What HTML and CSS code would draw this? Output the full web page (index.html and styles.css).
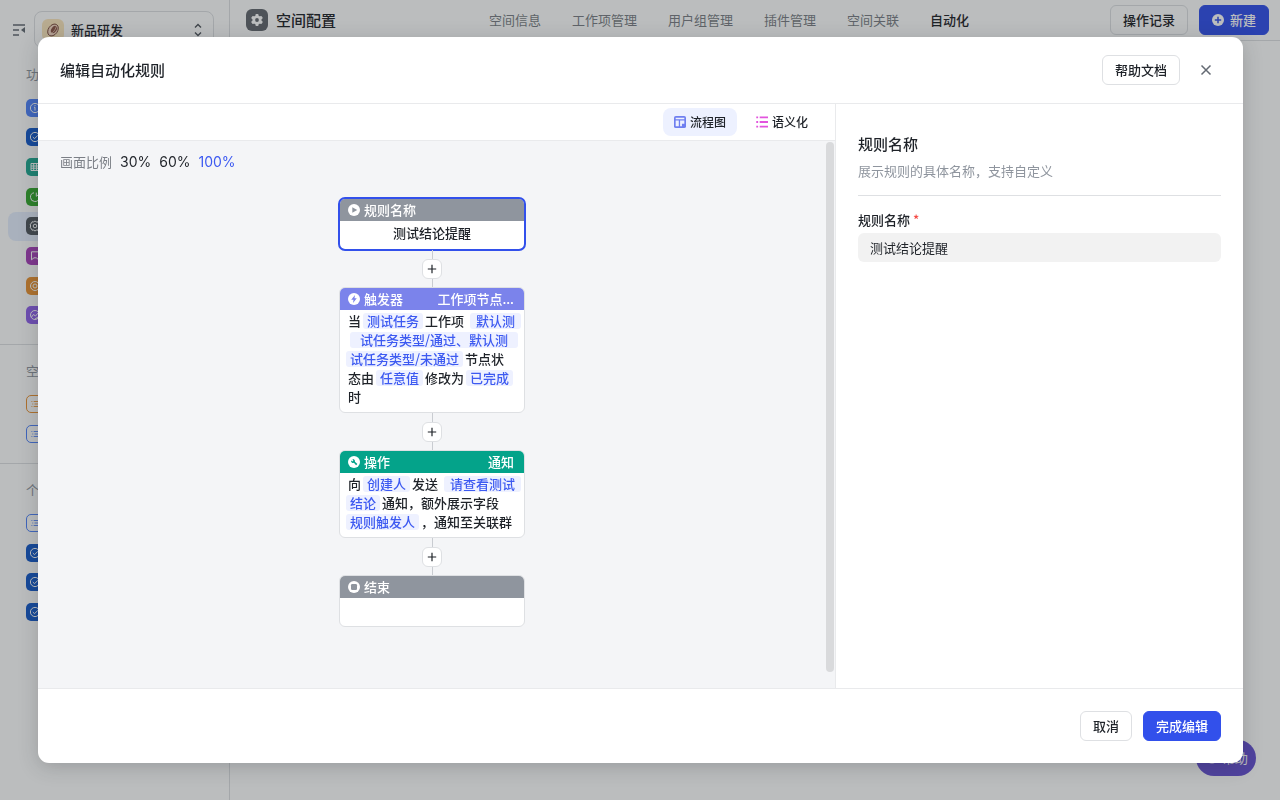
FILE: index.html
```html
<!DOCTYPE html>
<html lang="zh-CN">
<head>
<meta charset="utf-8">
<meta name="viewport" content="width=device-width, initial-scale=1">
<title>编辑自动化规则</title>
<link rel="stylesheet" href="styles.css">
</head>
<body>
<svg class="sprite" width="0" height="0" aria-hidden="true">
  <symbol id="check" viewBox="0 0 18 18"><circle cx="9" cy="9" r="4.6"/><path d="M6.8 9l1.7 1.7 3.4-3.4"/></symbol>
  <symbol id="list" viewBox="0 0 18 18"><path d="M5 6.2h1M7.5 6.2h6M6 9h1M8.500 9h5M5 11.800h1M7.500 11.800h6"/></symbol>
  <symbol id="gear" viewBox="0 0 18 18"><path d="M9 4l1.300.9 1.600-.1.600 1.500 1.300.9L13.400 9l.4 1.800-1.300.9-.6 1.500-1.600-.1L9 14l-1.300-.9-1.600.1-.6-1.500-1.300-.9L4.600 9l-.4-1.800 1.300-.9.600-1.500 1.600.1z"/><circle cx="9" cy="9" r="1.800"/></symbol>
  <symbol id="plus" viewBox="0 0 10 10"><path d="M5 .8v8.400M.8 5h8.400"/></symbol>
</svg>
<div class="app">
  <aside class="sidebar">
    <div class="space">
      <svg class="fold" viewBox="0 0 14 14"><path d="M1 2h12M1 7h6M1 12h6" fill="none" stroke="#646a73" stroke-width="1.300"/><path d="M13 4v6L9 7z" fill="#646a73"/></svg>
      <button class="space-select" type="button">
        <svg class="avatar" viewBox="0 0 22 22"><rect width="22" height="22" rx="6" fill="#fbe6bd"/><ellipse cx="11" cy="11" rx="4.600" ry="6.500" transform="rotate(35 11 11)" fill="#f6d9c4" stroke="#7b4a3c" stroke-width=".9"/><ellipse cx="12" cy="10.500" rx="2.500" ry="4" transform="rotate(35 12 10.500)" fill="#8b5546"/><path d="M7 15c3 0 6-3 7.500-8" fill="none" stroke="#f6d9c4" stroke-width=".7"/></svg>
        <span class="space-name">新品研发</span>
        <svg class="caret" viewBox="0 0 8 14"><path d="M1 4.500l3-3 3 3M1 9.500l3 3 3-3" fill="none" stroke="#51565d" stroke-width="1.400"/></svg>
      </button>
    </div>
    <div class="group-title">功能</div>
    <ul class="group group-eight">
      <li class="item"><svg class="tile blue" viewBox="0 0 18 18"><circle cx="9" cy="9" r="4.600"/><path d="M9 8.300v3.200M8 8.300h1M9 6v.9"/></svg></li>
      <li class="item"><svg class="tile navy"><use href="#check"/></svg></li>
      <li class="item"><svg class="tile teal" viewBox="0 0 18 18"><path d="M5 5.500h8.500v7H5zM5 8h8.500M5 10.200h8.500M7.700 5.500v7M10.600 5.500v7"/></svg></li>
      <li class="item"><svg class="tile green" viewBox="0 0 18 18"><path d="M8 4.800A4.400 4.400 0 1 0 13.200 10M10.300 4.600v3.700l3-2.300"/></svg></li>
      <li class="item active"><svg class="tile slate"><use href="#gear"/></svg></li>
      <li class="item"><svg class="tile purple" viewBox="0 0 18 18"><path d="M5.500 4.800h7v8l-2-2H8l-2.500 2z"/></svg></li>
      <li class="item"><svg class="tile orange" viewBox="0 0 18 18"><circle cx="9" cy="9" r="4.500"/><circle cx="9" cy="9" r="2"/></svg></li>
      <li class="item"><svg class="tile violet" viewBox="0 0 18 18"><circle cx="9" cy="9" r="4.500"/><path d="M5.500 11l2-2.500 2 1.500 3-3.500M9 13l3-2"/></svg></li>
    </ul>
    <div class="divider"></div>
    <div class="group-title">空间</div>
    <ul class="group group-two">
      <li class="item"><svg class="tile line-orange"><use href="#list"/></svg></li>
      <li class="item"><svg class="tile line-blue"><use href="#list"/></svg></li>
    </ul>
    <div class="divider"></div>
    <div class="group-title">个人</div>
    <ul class="group group-four">
      <li class="item"><svg class="tile line-blue"><use href="#list"/></svg></li>
      <li class="item"><svg class="tile navy"><use href="#check"/></svg></li>
      <li class="item"><svg class="tile navy"><use href="#check"/></svg></li>
      <li class="item"><svg class="tile navy"><use href="#check"/></svg></li>
    </ul>
  </aside>
  <main class="main">
    <header class="topbar">
      <svg class="config-icon" viewBox="0 0 22 22"><rect width="22" height="22" rx="6" fill="#64686f"/><g fill="#fff"><circle cx="11" cy="11" r="4.600"/><rect x="9.500" y="5" width="3" height="12" rx=".8"/><rect x="9.500" y="5" width="3" height="12" rx=".8" transform="rotate(60 11 11)"/><rect x="9.500" y="5" width="3" height="12" rx=".8" transform="rotate(120 11 11)"/></g><circle cx="11" cy="11" r="1.900" fill="#64686f"/></svg>
      <h1 class="page-title">空间配置</h1>
      <nav class="nav">
        <a href="#">空间信息</a><a href="#">工作项管理</a><a href="#">用户组管理</a><a href="#">插件管理</a><a href="#">空间关联</a><a class="current" href="#">自动化</a>
      </nav>
      <div class="actions">
        <button class="btn" type="button">操作记录</button>
        <button class="btn primary" type="button"><svg class="add" viewBox="0 0 12 12"><circle cx="6" cy="6" r="6" fill="#fff"/><path d="M6 2.800v6.400M2.800 6h6.400" stroke="#3250eb" stroke-width="1.500"/></svg>新建</button>
      </div>
    </header>
  </main>
  <button class="helper" type="button"><svg class="helper-icon" viewBox="0 0 12 12"><circle cx="6" cy="6" r="5.500" fill="#fff"/></svg>帮助</button>
</div>

<div class="mask">
  <section class="dialog" role="dialog" aria-labelledby="dialog-title">
    <header class="dialog-head">
      <h2 class="dialog-title" id="dialog-title">编辑自动化规则</h2>
      <button class="btn" type="button">帮助文档</button>
      <button class="close" type="button" aria-label="关闭"><svg viewBox="0 0 12 12"><path d="M1.500 1.500l9 9M10.500 1.500l-9 9" stroke="#646a73" stroke-width="1.500"/></svg></button>
    </header>
    <div class="dialog-body">
      <div class="flow">
        <div class="tabs">
          <button class="tab selected" type="button"><svg viewBox="0 0 13 13"><rect width="13" height="13" rx="2" fill="#6f7ff0"/><path d="M1.800 1.800h9.400v1.600H1.800zM1.800 5h3.400v6.200H1.800zM6.600 5h4.600v3.400H8.600v2.800h-2z" fill="#edf1ff"/></svg>流程图</button>
          <button class="tab" type="button"><svg viewBox="0 0 13 13"><g stroke="#e254dd" stroke-width="1.900"><path d="M.3 1.500h2M4 1.500h9M.3 6.500h2M4 6.500h9M.3 11.500h2M4 11.500h9"/></g></svg>语义化</button>
        </div>
        <div class="canvas">
          <div class="ratio"><span class="ratio-label">画面比例</span><button type="button">30%</button><button type="button">60%</button><button class="on" type="button">100%</button></div>
          <div class="nodes">
            <article class="node chosen">
              <header class="node-head gray"><svg viewBox="0 0 12 12"><circle cx="6" cy="6" r="6" fill="#fff"/><path d="M4.300 3.200v5.600L9.200 6z" fill="#8f959e"/></svg><span>规则名称</span></header>
              <div class="node-name">测试结论提醒</div>
            </article>
            <div class="link"><button class="insert" type="button" aria-label="添加"><svg><use href="#plus"/></svg></button></div>
            <article class="node">
              <header class="node-head indigo"><svg viewBox="0 0 12 12"><circle cx="6" cy="6" r="6" fill="#fff"/><path d="M7 2L3.200 6.700h2.300L5 10l3.800-4.700H6.500z" fill="#7b83eb"/></svg><span>触发器</span><span class="kind">工作项节点...</span></header>
              <div class="node-text">
                <div class="line">当<b class="chip">测试任务</b>工作项<b class="chip loose">默认测</b></div>
                <div class="line"><b class="chip indent">试任务类型/通过、默认测</b></div>
                <div class="line"><b class="chip first">试任务类型/未通过</b>节点状</div>
                <div class="line">态由<b class="chip">任意值</b>修改为<b class="chip">已完成</b></div>
                <div class="line">时</div>
              </div>
            </article>
            <div class="link"><button class="insert" type="button" aria-label="添加"><svg><use href="#plus"/></svg></button></div>
            <article class="node">
              <header class="node-head emerald"><svg viewBox="0 0 12 12"><circle cx="6" cy="6" r="6" fill="#fff"/><path d="M3 4.300a2.200 2.200 0 0 0 2.900 2.500l2.200 2.500 1.300-1.300-2.500-2.200A2.200 2.200 0 0 0 4.300 3l1.100 1.200-1.200 1.200z" fill="#04a38a"/></svg><span>操作</span><span class="kind">通知</span></header>
              <div class="node-text">
                <div class="line">向<b class="chip">创建人</b>发送<b class="chip loose">请查看测试</b></div>
                <div class="line"><b class="chip first">结论</b>通知，额外展示字段</div>
                <div class="line"><b class="chip first">规则触发人</b>，通知至关联群</div>
              </div>
            </article>
            <div class="link"><button class="insert" type="button" aria-label="添加"><svg><use href="#plus"/></svg></button></div>
            <article class="node">
              <header class="node-head gray"><svg viewBox="0 0 12 12"><circle cx="6" cy="6" r="6" fill="#fff"/><rect x="3" y="3" width="6" height="6" rx="1.200" fill="#8f959e"/></svg><span>结束</span></header>
              <div class="node-name"></div>
            </article>
          </div>
          <div class="thumb"></div>
        </div>
      </div>
      <aside class="panel">
        <div class="panel-head">
          <h3 class="panel-title">规则名称</h3>
          <p class="panel-desc">展示规则的具体名称，支持自定义</p>
        </div>
        <label class="field-label" for="rule-name">规则名称 <span class="required">*</span></label>
        <input class="field" id="rule-name" type="text" value="测试结论提醒">
      </aside>
    </div>
    <footer class="dialog-foot">
      <button class="btn" type="button">取消</button>
      <button class="btn primary" type="button">完成编辑</button>
    </footer>
  </section>
</div>
</body>
</html>
```
FILE: styles.css
```css
* { box-sizing: border-box; }
body {
  margin: 0;
  font: 13px/20px "Noto Sans CJK SC", "Noto Sans", sans-serif;
  color: #1f2329;
  overflow: hidden;
}
button, input { font: inherit; color: inherit; margin: 0; }
button { border: 0; background: none; padding: 0; cursor: pointer; white-space: nowrap; }
h1, h2, h3, p, ul { margin: 0; padding: 0; }
ul { list-style: none; }
svg { display: block; flex: none; }
.sprite { position: absolute; }

.app { display: flex; min-height: 100vh; background: #fff; }
.sidebar { width: 230px; flex: none; padding-top: 11px; border-right: 1px solid #dee0e3; overflow: hidden; }
.space { display: flex; align-items: center; padding: 0 15px 0 12px; gap: 8px; }
.fold { width: 14px; height: 14px; }
.space-select {
  flex: 1; display: flex; align-items: center; gap: 7px;
  height: 37px; padding: 0 11px 0 7px;
  border: 1px solid #dee0e3; border-radius: 8px;
}
.avatar { width: 22px; height: 22px; }
.space-name { flex: 1; text-align: left; font-weight: 500; }
.caret { width: 8px; height: 14px; }
.group-title { padding: 16px 26px 9px; color: #8f959e; }
.group { display: grid; grid-auto-rows: 1fr; padding: 0 8px; }
.group-title + .group-two, .group-title + .group-four { margin-top: -1px; }
.group-eight { height: 237px; }
.group-two { height: 60px; }
.group-four { height: 119px; }
.item { display: flex; align-items: center; padding-left: 18px; border-radius: 8px; }
.item.active { background: #e6eefe; }
.tile { width: 18px; height: 18px; border-radius: 5px; fill: none; stroke: #fff; stroke-width: 1; }
.blue { background: #5083fb; }
.navy { background: #1459ca; }
.teal { background: #1fa891; }
.green { background: #34a82d; }
.slate { background: #51565d; }
.purple { background: #a83fba; }
.orange { background: #ec9332; }
.violet { background: #9061ec; }
.line-orange { border: 1px solid #ec9332; stroke: #ec9332; }
.line-blue { border: 1px solid #5083fb; stroke: #5083fb; }
.divider { height: 1px; margin: 14px 0 0; background: #dee0e3; }

.main { flex: 1; min-width: 0; background: #fff; }
.topbar { display: flex; align-items: center; height: 41px; padding: 0 11px 0 16px; border-bottom: 1px solid #dee0e3; }
.config-icon { width: 22px; height: 22px; }
.page-title { margin-left: 8px; font-size: 15px; font-weight: 500; white-space: nowrap; }
.nav { display: flex; gap: 31px; margin: 0 auto; padding-left: 12px; white-space: nowrap; }
.nav a { color: #7b7f86; text-decoration: none; }
.nav .current { color: #1f2329; font-weight: 500; }
.actions { display: flex; gap: 11px; }
.btn {
  display: flex; align-items: center; gap: 6px;
  height: 30px; padding: 0 12px;
  border: 1px solid #dee0e3; border-radius: 6px;
  font-weight: 500;
}
.btn.primary { border-color: #3250eb; background: #3250eb; color: #fff; }
.add { width: 12px; height: 12px; }
.helper {
  position: fixed; right: 24px; bottom: 24px;
  display: flex; align-items: center; gap: 4px;
  height: 36px; padding: 0 8px 0 10px;
  border-radius: 18px; background: #6650d2; color: #fff;
}
.helper-icon { width: 12px; height: 12px; }

.mask { position: fixed; inset: 0; display: flex; padding: 37px 37px 37px 38px; background: rgba(31, 35, 41, 0.3); }
.dialog {
  flex: 1; min-width: 0; display: flex; flex-direction: column;
  border-radius: 11px; background: #fff; overflow: hidden;
  box-shadow: 0 4px 20px rgba(31, 35, 41, 0.22);
}
.dialog-head { display: flex; align-items: center; gap: 11px; padding: 18px 22px; border-bottom: 1px solid #e9eaec; }
.dialog-title { flex: 1; font-size: 15px; font-weight: 500; }
.close { width: 30px; height: 30px; display: grid; place-items: center; }
.close svg { width: 12px; height: 12px; }
.dialog-body { flex: 1; min-height: 0; display: flex; }
.flow { flex: 1; min-width: 0; display: flex; flex-direction: column; }
.tabs { display: flex; justify-content: flex-end; gap: 8px; padding: 4px 16px; border-bottom: 1px solid #e9eaec; }
.tab { display: flex; align-items: center; gap: 4px; height: 28px; padding: 0 11px; border-radius: 8px; font-size: 12px; font-weight: 500; }
.tab svg { width: 12px; height: 12px; }
.tab.selected { background: #edf1ff; }
.canvas { position: relative; flex: 1; min-height: 0; padding: 11px 9px 0 0; background: #f4f5f7; overflow: hidden; }
.thumb { position: absolute; top: 1px; right: 1px; bottom: 16px; width: 8px; border-radius: 4px; background: #d9dadc; }
.ratio { display: flex; gap: 8px; padding-left: 22px; }
.ratio-label { color: #7b7f86; }
.ratio button { font-family: Inter, sans-serif; font-size: 14px; }
.ratio .on { color: #3d5af1; }
.nodes { display: flex; flex-direction: column; align-items: center; padding-top: 26px; }
.node { width: 186px; border: 1px solid #dee0e3; border-radius: 6px; background: #fff; overflow: hidden; font-weight: 500; }
.node.chosen { outline: 2px solid #3250eb; outline-offset: -1px; }
.node-head { display: flex; align-items: center; gap: 4px; height: 22px; padding: 0 10px 0 8px; color: #fff; }
.node-head svg { width: 12px; height: 12px; }
.kind { margin-left: auto; }
.gray { background: #8f959e; }
.indigo { background: #7b83eb; }
.emerald { background: #04a38a; }
.node-name { height: 28px; line-height: 24px; text-align: center; }
.node-text { padding: 1px 0 6px 8px; }
.line { line-height: 19px; white-space: nowrap; }
.chip { margin: 0 2px; padding: 0 4px; border-radius: 3px; background: #eef1ff; color: #3d5af1; font-weight: 500; line-height: 16px; display: inline-block; }
.chip.loose { margin-left: 6px; padding: 0 6px; }
.chip.indent { padding: 0 10px; }
.chip.first { margin-left: -2px; }
.link { display: grid; place-items: center; width: 20px; height: 37px; background: linear-gradient(#c9ccd1, #c9ccd1) center / 1px 100% no-repeat; }
.insert { width: 20px; height: 20px; display: grid; place-items: center; border: 1px solid #dee0e3; border-radius: 6px; background: #fff; }
.insert svg { width: 10px; height: 10px; stroke: #1f2329; stroke-width: 1.200; }

.panel { flex: 0 0 408px; padding: 28px 22px; border-left: 1px solid #e9eaec; }
.panel-head { padding-bottom: 14px; border-bottom: 1px solid #dee0e3; }
.panel-title { font-size: 15px; line-height: 24px; font-weight: 500; }
.panel-desc { margin-top: 5px; color: #8f959e; }
.field-label { display: block; margin: 14px 0 3px; font-weight: 500; }
.required { color: #f54a45; }
.field { display: block; width: 100%; height: 29px; padding: 0 12px; border: 0; border-radius: 6px; background: #f2f2f2; }
.dialog-foot { display: flex; justify-content: flex-end; gap: 11px; padding: 22px; border-top: 1px solid #e9eaec; }
```
